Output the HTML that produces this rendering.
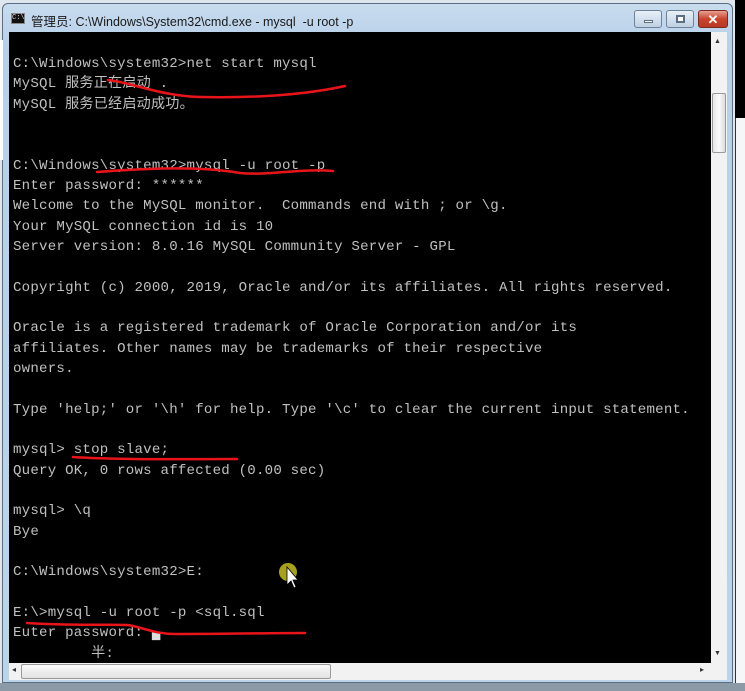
<!DOCTYPE html>
<html><head><meta charset="utf-8"><style>
*{margin:0;padding:0;box-sizing:border-box}
body{width:745px;height:691px;overflow:hidden;background:#dfe6ee;position:relative;font-family:"Liberation Sans","Noto Sans CJK SC",sans-serif}
.abs{position:absolute}
pre{position:absolute;left:13px;top:54px;font-family:"Liberation Mono","Noto Sans CJK SC",monospace;font-size:14.1px;line-height:20.33px;color:#c0c0c0;white-space:pre;letter-spacing:0.22px}
</style></head><body>
<div class="abs" style="left:735px;top:0;width:10px;height:118px;background:#000"></div>
<div class="abs" style="left:735px;top:118px;width:10px;height:565px;background:#f4f6f8;border-left:1px solid #333"></div>
<div class="abs" style="left:0;top:683px;width:745px;height:8px;background:#8c9aa8"></div>
<div class="abs" style="left:2px;top:3px;width:731px;height:680px;background:linear-gradient(#c9dcef,#b7d0e8 40px,#bcd4ea);border:1px solid #5a6f85;border-radius:6px 6px 0 0"></div>
<div class="abs" style="left:0;top:40px;width:3px;height:120px;background:#fff"></div>
<div class="abs" style="left:11px;top:13px;width:14px;height:11px;background:#111;border:1px solid #888"></div>
<div class="abs" style="left:12px;top:14px;font:7px 'Liberation Mono';color:#ddd">C:\</div>
<div class="abs" style="left:31px;top:11px;font-size:12.5px;color:#1a1a1a">管理员: C:\Windows\System32\cmd.exe - mysql &nbsp;-u root -p</div>
<div class="abs" style="left:634px;top:10px;width:28px;height:18px;border:1px solid #6d8198;border-radius:3px;background:linear-gradient(#e8f0f8,#bfd0e2)"><div class="abs" style="left:9px;top:9px;width:9px;height:3px;background:#fff;border:1px solid #5b6e82"></div></div>
<div class="abs" style="left:666px;top:10px;width:28px;height:18px;border:1px solid #6d8198;border-radius:3px;background:linear-gradient(#e8f0f8,#bfd0e2)"><div class="abs" style="left:9px;top:4px;width:9px;height:8px;background:#fff;border:2px solid #5b6e82"></div></div>
<div class="abs" style="left:698px;top:10px;width:30px;height:18px;border:1px solid #7a2a20;border-radius:3px;background:linear-gradient(#e8a090,#c8442e 50%,#b83a24);color:#fff;font:bold 13px 'Liberation Sans';text-align:center;line-height:17px">✕</div>
<div class="abs" style="left:9px;top:32px;width:702px;height:631px;background:#000"></div>
<div class="abs" style="left:711px;top:32px;width:16px;height:631px;background:#f2f2f2"></div>
<div class="abs" style="left:714px;top:38px;font-size:7px;color:#333">▲</div>
<div class="abs" style="left:712px;top:93px;width:14px;height:60px;background:linear-gradient(90deg,#e6e6e6,#fafafa,#dcdcdc);border:1px solid #9a9a9a;border-radius:2px"></div>
<div class="abs" style="left:714px;top:650px;font-size:7px;color:#333">▼</div>
<div class="abs" style="left:9px;top:663px;width:718px;height:17px;background:#f2f2f2"></div>
<div class="abs" style="left:21px;top:664px;width:310px;height:15px;background:linear-gradient(#fbfbfb,#e2e2e2);border:1px solid #9a9a9a;border-radius:2px"></div>
<div class="abs" style="left:12px;top:665px;font-size:8px;color:#333">◂</div>
<div class="abs" style="left:700px;top:665px;font-size:8px;color:#333">▸</div>
<pre>C:\Windows\system32&gt;net start mysql
MySQL 服务正在启动 .
MySQL 服务已经启动成功。


C:\Windows\system32&gt;mysql -u root -p
Enter password: ******
Welcome to the MySQL monitor.  Commands end with ; or \g.
Your MySQL connection id is 10
Server version: 8.0.16 MySQL Community Server - GPL

Copyright (c) 2000, 2019, Oracle and/or its affiliates. All rights reserved.

Oracle is a registered trademark of Oracle Corporation and/or its
affiliates. Other names may be trademarks of their respective
owners.

Type 'help;' or '\h' for help. Type '\c' to clear the current input statement.

mysql&gt; stop slave;
Query OK, 0 rows affected (0.00 sec)

mysql&gt; \q
Bye

C:\Windows\system32&gt;E:

E:\&gt;mysql -u root -p &lt;sql.sql
Euter password: <span style="color:#ddd">▄</span>
         半:</pre>
<svg class="abs" style="left:0;top:0" width="745" height="691">
<g fill="none" stroke="#e8141a" stroke-width="2.5" stroke-linecap="round">
<path d="M108 80 C130 82,160 96,200 97 C250 98,300 96,345 86"/>
<path d="M97 172 C150 168,200 166,240 173 C270 176,300 168,333 171"/>
<path d="M73 457 C120 460,180 459,237 459"/>
<path d="M27 623 C70 626,110 624,128 625 C145 628,155 634,175 634 C230 634,270 633,305 633"/>
</g>
<circle cx="288" cy="572" r="9" fill="#a8a020"/>
<path d="M287 567 L287 585 L291 581 L294 588 L296 587 L293 580 L298 580 Z" fill="#fff" stroke="#000" stroke-width="0.8"/>
</svg>
</body></html>
